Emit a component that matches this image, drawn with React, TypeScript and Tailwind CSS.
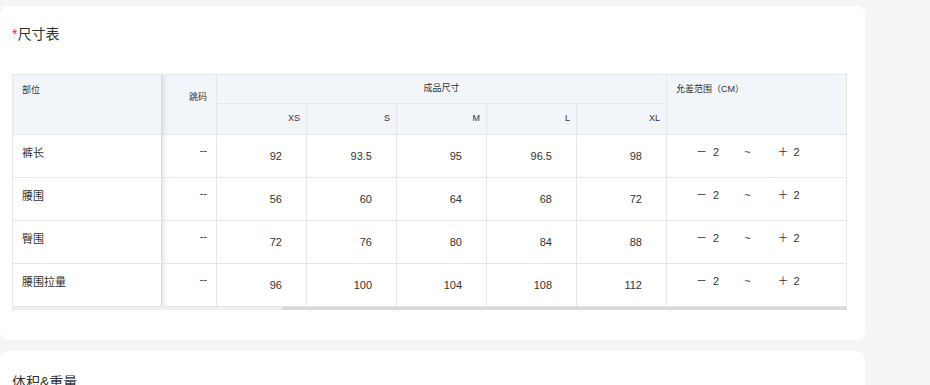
import React from "react";

const font = { fontFamily: '"Liberation Sans", "Noto Sans CJK SC", sans-serif' };

const sizes = ["XS", "S", "M", "L", "XL"];
const rows: { name: string; vals: string[] }[] = [
  { name: "裤长", vals: ["92", "93.5", "95", "96.5", "98"] },
  { name: "腰围", vals: ["56", "60", "64", "68", "72"] },
  { name: "臀围", vals: ["72", "76", "80", "84", "88"] },
  { name: "腰围拉量", vals: ["96", "100", "104", "108", "112"] },
];

const shadowCell = "shadow-[inset_6px_0_5px_-4px_rgba(0,0,0,0.10)]";

function Tolerance() {
  return (
    <div className="flex items-start pt-[10px] text-[11px] leading-[14px] text-[#333]">
      <span className="ml-[29px] w-[11px] text-center">－</span>
      <span className="ml-[6px]">2</span>
      <span className="ml-[25px]">~</span>
      <span className="ml-[27px] w-[11px] text-center">＋</span>
      <span className="ml-[5px]">2</span>
    </div>
  );
}

export default function App() {
  return (
    <div className="w-[930px] h-[385px] overflow-hidden bg-[#f5f5f5] pt-[6px]" style={font}>
      <div className="w-[865px] h-[334px] bg-white rounded-lg px-3 pt-[18px]">
        <div className="text-[14px] leading-[20px] text-[#333]">
          <span className="text-[#f5222d]">*</span>尺寸表
        </div>
        <div className="mt-[30px] w-[835px]">
          <div className="grid grid-cols-[149px_55px_90px_90px_90px_90px_90px_180px] grid-rows-[29px_31px_43px_43px_43px_43px] border-t border-l border-[#e6e6e6] text-[#333]">
            {/* header */}
            <div className="row-span-2 bg-[#f2f5fa] border-r border-r-[#d9d9d9] border-b border-b-[#e6e6e6] pl-[9px] pt-[8px] text-[9px] leading-[14px]">
              部位
            </div>
            <div className={`row-span-2 bg-[#f2f5fa] border-r border-b border-[#e6e6e6] pr-[9px] pt-[15px] text-right text-[9px] leading-[14px] ${shadowCell}`}>
              跳码
            </div>
            <div className="col-span-5 bg-[#f2f5fa] border-r border-b border-[#e6e6e6] flex items-center justify-center text-[9px]">
              成品尺寸
            </div>
            <div className="row-span-2 bg-[#f2f5fa] border-r border-b border-[#e6e6e6] pl-[9px] pt-[7px] text-[9px] leading-[14px]">
              允差范围（CM）
            </div>
            {sizes.map((s) => (
              <div
                key={s}
                className="bg-[#f2f5fa] border-r border-b border-[#e6e6e6] flex items-center justify-end pr-[6px] text-[9px]"
              >
                {s}
              </div>
            ))}
            {/* body */}
            {rows.map((r) => (
              <React.Fragment key={r.name}>
                <div className="bg-white border-r border-r-[#d9d9d9] border-b border-b-[#e6e6e6] pl-[9px] pt-[11px] text-[11px] leading-[14px]">
                  {r.name}
                </div>
                <div className={`bg-white border-r border-b border-[#e6e6e6] pr-[9px] pt-[8px] text-right text-[11px] leading-[14px] ${shadowCell}`}>
                  --
                </div>
                {r.vals.map((v, i) => (
                  <div
                    key={i}
                    className="bg-white border-r border-b border-[#e6e6e6] flex items-center justify-end pr-[24px] pt-[1px] text-[11px]"
                  >
                    {v}
                  </div>
                ))}
                <div className="bg-white border-r border-b border-[#e6e6e6]">
                  <Tolerance />
                </div>
              </React.Fragment>
            ))}
          </div>
          <div className="h-[3px] bg-[#f0f0f0] flex">
            <div className="ml-[270px] w-[565px] h-[3px] bg-[#d9d9d9]" />
          </div>
        </div>
      </div>
      <div className="mt-[11px] w-[865px] h-[60px] bg-white rounded-lg px-3 pt-[21px]">
        <div className="text-[14px] leading-[20px] text-[#333]">体积&amp;重量</div>
      </div>
    </div>
  );
}
